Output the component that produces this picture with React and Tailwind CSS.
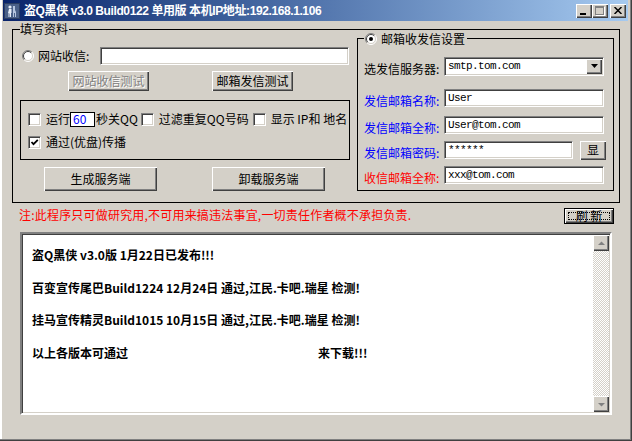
import React from 'react';

const sunken =
  'border border-t-[#808080] border-l-[#808080] border-b-white border-r-white shadow-[inset_1px_1px_0_#404040,inset_-1px_-1px_0_#d4d0c8]';
const raised =
  'bg-[#d4d0c8] shadow-[inset_1px_1px_0_#ffffff,inset_-1px_-1px_0_#404040,inset_-2px_-2px_0_#808080]';
const mono = "font-['Liberation_Mono',monospace] text-[11px] tracking-[-0.6px]";

const Radio = ({ checked }) => (
  <svg width="12" height="12" viewBox="0 0 12 12" className="shrink-0">
    <circle cx="6" cy="6" r="5" fill="#ffffff" />
    <path d="M2.1 9.9 A5.5 5.5 0 0 1 9.9 2.1" fill="none" stroke="#808080" />
    <path d="M2.8 9.2 A4.5 4.5 0 0 1 9.2 2.8" fill="none" stroke="#404040" />
    <path d="M9.9 2.1 A5.5 5.5 0 0 1 2.1 9.9" fill="none" stroke="#ffffff" />
    <path d="M9.2 2.8 A4.5 4.5 0 0 1 2.8 9.2" fill="none" stroke="#d4d0c8" />
    {checked && <circle cx="6" cy="6" r="2" fill="#000000" />}
  </svg>
);

const Check = ({ checked }) => (
  <div className={`w-[13px] h-[13px] shrink-0 bg-white ${sunken} flex items-center justify-center`}>
    {checked && (
      <svg width="9" height="9" viewBox="0 0 9 9">
        <path d="M1.5 4 L3.5 6.2 L7.8 1.8" fill="none" stroke="#000000" strokeWidth="1.8" />
      </svg>
    )}
  </div>
);

const Field = ({ className = '', children }) => (
  <div className={`bg-white ${sunken} flex items-center pl-[3px] ${mono} ${className}`}>{children}</div>
);

const Button = ({ className = '', disabled, children }) => (
  <div
    className={`${raised} flex items-center justify-center ${
      disabled ? 'text-[#808080] [text-shadow:1px_1px_0_#ffffff]' : 'text-black'
    } ${className}`}
  >
    {children}
  </div>
);

const TitleButton = ({ children, className = '' }) => (
  <div className={`w-[16px] h-[14px] ${raised} flex items-center justify-center ${className}`}>{children}</div>
);

const FormRow = ({ label, color = 'text-black', className = '', children }) => (
  <div className={`flex items-center ${className}`}>
    <span className={`w-[80px] pt-[6px] ${color}`}>{label}</span>
    {children}
  </div>
);

export default function App() {
  return (
    <div className="w-[632px] h-[441px] bg-[#d4d0c8] flex flex-col pl-[3px] pr-[4px] pb-[4px] overflow-hidden shadow-[inset_-1px_-1px_0_#404040,inset_-2px_-2px_0_#808080,inset_2px_0_0_#ffffff] font-['Noto_Sans_CJK_SC',sans-serif] text-[12px] leading-[14px] text-black">
      {/* title bar */}
      <div className="h-[21px] shrink-0 flex items-center bg-linear-to-r from-[#0a246a] to-[#a6caf0]">
        <svg width="16" height="16" viewBox="0 0 16 16" className="ml-[1px] shrink-0">
          <rect width="16" height="16" fill="#2c3e63" />
          <rect x="1" y="1" width="14" height="14" fill="#4a6088" />
          <circle cx="6" cy="4" r="1.6" fill="#e8eef8" />
          <path d="M5 6 H7.5 V10 H7 V14 H6 V10.5 H5.5 V14 H4.5 V10 H4 Z" fill="#e8eef8" />
          <path d="M9 3 H11 V7 L12 9 V14 H11 V10 H10 V14 H9 Z" fill="#b7c6e0" />
        </svg>
        <span className="ml-[4px] font-['Liberation_Sans','Noto_Sans_CJK_SC',sans-serif] font-bold text-[12px] tracking-[-0.4px] text-white whitespace-nowrap">
          盗Q黑侠 v3.0 Build0122 单用版 本机IP地址:192.168.1.106
        </span>
        <div className="ml-auto mr-[2px] flex items-center">
          <TitleButton>
            <div className="w-[6px] h-[2px] bg-black mt-[6px] mr-[2px]" />
          </TitleButton>
          <TitleButton>
            <div className="w-[9px] h-[9px] border border-t-2 border-[#808080] shadow-[1px_1px_0_#ffffff] mr-[1px]" />
          </TitleButton>
          <TitleButton className="ml-[2px]">
            <svg width="8" height="7" viewBox="0 0 8 7">
              <path d="M0.5 0 L7.5 7 M7.5 0 L0.5 7" stroke="#000000" strokeWidth="1.5" />
            </svg>
          </TitleButton>
        </div>
      </div>

      {/* 填写资料 frame */}
      <div className="relative mt-[8px] ml-[9px] w-[608px] h-[174px] shrink-0 border border-black flex">
        <span className="absolute left-[7px] -top-[8px] bg-[#d4d0c8] pr-[1px]">填写资料</span>

        <div className="flex flex-col pl-[7px] w-[337px]">
          <div className="mt-[17px] h-[18px] flex items-center">
            <div className="ml-[2px]">
              <Radio />
            </div>
            <span className="ml-[4px] w-[62px]">网站收信:</span>
            <Field className="w-[249px] h-[18px]" />
          </div>
          <div className="mt-[6px] h-[20px] flex">
            <Button disabled className="ml-[48px] w-[81px]">网站收信测试</Button>
            <Button className="ml-[63px] w-[81px]">邮箱发信测试</Button>
          </div>
          <div className="mt-[9px] w-[330px] h-[60px] border border-black flex flex-col pt-[10px] pl-[7px] gap-[7px]">
            <div className="h-[16px] flex items-center">
              <Check />
              <span className="ml-[5px]">运行</span>
              <div className="w-[25px] h-[15px] bg-white border border-black pl-[2px] flex items-center text-[#0000ff]">60</div>
              <span className="ml-[1px]">秒关QQ</span>
              <div className="ml-[3px]">
                <Check />
              </div>
              <span className="ml-[5px]">过滤重复QQ号码</span>
              <div className="ml-[4px]">
                <Check />
              </div>
              <span className="ml-[5px] whitespace-pre">显示 IP和 地名</span>
            </div>
            <div className="h-[16px] flex items-center">
              <Check checked />
              <span className="ml-[5px]">通过(优盘)传播</span>
            </div>
          </div>
          <div className="mt-[7px] h-[24px] flex">
            <Button className="ml-[24px] w-[113px]">生成服务端</Button>
            <Button className="ml-[55px] w-[113px]">卸载服务端</Button>
          </div>
        </div>

        {/* 邮箱收发信设置 */}
        <div className="relative ml-[7px] mt-[8px] w-[257px] h-[153px] border border-black flex flex-col pl-[6px] pt-[17px]">
          <div className="absolute left-[6px] -top-[7px] flex items-center gap-[4px] bg-[#d4d0c8] pl-[1px] pr-[2px]">
            <Radio checked />
            <span>邮箱收发信设置</span>
          </div>
          <FormRow label="选发信服务器:">
            <div className={`w-[160px] h-[19px] bg-white ${sunken} flex items-center pl-[3px] pr-[1px] ${mono}`}>
              <span className="flex-1">smtp.tom.com</span>
              <div className={`w-[16px] h-[15px] ${raised} flex items-center justify-center`}>
                <svg width="7" height="4" viewBox="0 0 7 4">
                  <path d="M0 0 H7 L3.5 4 Z" fill="#000000" />
                </svg>
              </div>
            </div>
          </FormRow>
          <FormRow label="发信邮箱名称:" color="text-[#0000ff]" className="mt-[12px]">
            <Field className="w-[160px] h-[18px]">User</Field>
          </FormRow>
          <FormRow label="发信邮箱全称:" color="text-[#0000ff]" className="mt-[7px]">
            <Field className="w-[160px] h-[18px]">User@tom.com</Field>
          </FormRow>
          <FormRow label="发信邮箱密码:" color="text-[#0000ff]" className="mt-[5px]">
            <Field className="w-[129px] h-[18px]">******</Field>
            <Button className="ml-[7px] w-[26px] h-[19px]">显</Button>
          </FormRow>
          <FormRow label="收信邮箱全称:" color="text-[#ff0000]" className="mt-[5px]">
            <Field className="w-[160px] h-[18px]">xxx@tom.com</Field>
          </FormRow>
        </div>
      </div>

      {/* note + refresh */}
      <div className="mt-[5px] h-[16px] shrink-0 flex items-center">
        <span className="ml-[16px] mb-[3px] text-[#ff0000] whitespace-nowrap tracking-[0.2px]">
          注:此程序只可做研究用,不可用来搞违法事宜,一切责任作者概不承担负责.
        </span>
        <div className="ml-auto mr-[14px] w-[50px] h-[16px] border border-black">
          <div className={`w-full h-full ${raised} flex items-center justify-center p-[3px]`}>
            <div className="w-full h-full border border-dotted border-black flex items-center justify-center whitespace-pre">
              刷 新
            </div>
          </div>
        </div>
      </div>

      {/* text area */}
      <div className="mt-[8px] ml-[17px] w-[592px] h-[183px] shrink-0 bg-white border-2 border-t-[#808080] border-l-[#808080] border-b-white border-r-white shadow-[inset_1px_1px_0_#404040,inset_-1px_-1px_0_#d4d0c8] flex p-[1px]">
        <div className="flex-1 pl-[9px] pt-[12px] font-bold leading-[16.3px] whitespace-pre">
          盗Q黑侠 v3.0版 1月22日已发布!!!{'\n\n'}百变宣传尾巴Build1224 12月24日 通过,江民.卡吧.瑞星 检测!{'\n\n'}挂马宣传精灵Build1015 10月15日 通过,江民.卡吧.瑞星 检测!{'\n\n'}
          <span className="inline-block w-[286px]">以上各版本可通过</span>来下载!!!
        </div>
        <div className="w-[16px] flex flex-col">
          <div className={`w-[16px] h-[16px] ${raised} flex items-center justify-center`}>
            <svg width="7" height="5" viewBox="0 0 7 5">
              <path d="M0 4 H7 L3.5 0.5 Z" fill="#808080" />
            </svg>
          </div>
          <div className="flex-1 bg-[repeating-conic-gradient(#d4d0c8_0_25%,#ffffff_0_50%)] bg-[length:2px_2px]" />
          <div className={`w-[16px] h-[16px] ${raised} flex items-center justify-center`}>
            <svg width="7" height="5" viewBox="0 0 7 5">
              <path d="M0 1 H7 L3.5 4.5 Z" fill="#808080" />
            </svg>
          </div>
        </div>
      </div>
    </div>
  );
}
